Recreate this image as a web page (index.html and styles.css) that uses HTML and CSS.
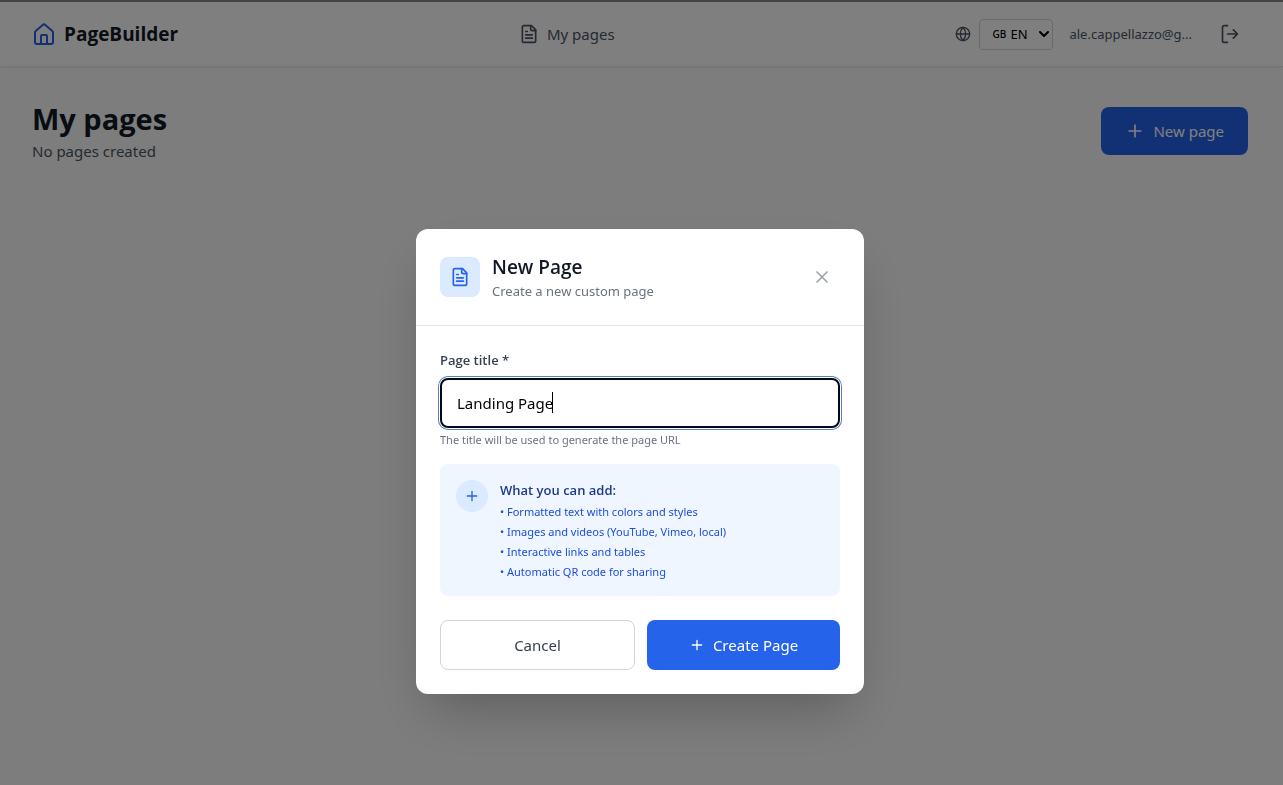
FILE: index.html
```html
<!DOCTYPE html>
<html lang="en">
<head>
    <meta charset="UTF-8">
    <meta name="viewport" content="width=device-width, initial-scale=1.0">
    <title>PageBuilder</title>
    <link rel="stylesheet" href="styles.css">
</head>
<body>
    <header class="navbar">
        <a href="#" class="brand">
            <svg class="icon-lg" viewBox="0 0 24 24"><path d="M3 10.500a2 2 0 0 1 .7-1.500l7-6.100a2 2 0 0 1 2.600 0l7 6.100a2 2 0 0 1 .7 1.500V20a2 2 0 0 1-2 2H5a2 2 0 0 1-2-2z"/><path d="M9 22v-8a1 1 0 0 1 1-1h4a1 1 0 0 1 1 1v8"/></svg>
            <span>PageBuilder</span>
        </a>
        <nav>
            <a href="#" class="nav-link">
                <svg class="icon-md" viewBox="0 0 24 24"><path d="M15 2H6a2 2 0 0 0-2 2v16a2 2 0 0 0 2 2h12a2 2 0 0 0 2-2V7z"/><path d="M14 2v4a2 2 0 0 0 2 2h4"/><path d="M10 9H8M16 13H8M16 17H8"/></svg>
                <span>My pages</span>
            </a>
        </nav>
        <div class="user-area">
            <div class="language">
                <svg class="icon-sm" viewBox="0 0 24 24"><circle cx="12" cy="12" r="10"/><path d="M12 2a14.500 14.500 0 0 0 0 20 14.500 14.500 0 0 0 0-20M2 12h20"/></svg>
                <div class="select-box">
                    <small class="flag">GB</small>
                    <select class="lang-select" aria-label="Language">
                        <option>EN</option>
                        <option>IT</option>
                    </select>
                    <svg class="chevron" viewBox="0 0 10 6"><path d="M1 1l4 4 4-4"/></svg>
                </div>
            </div>
            <span class="email">ale.cappellazzo@g...</span>
            <button type="button" class="logout" aria-label="Log out">
                <svg class="icon-md" viewBox="0 0 24 24"><path d="M9 22H5a2 2 0 0 1-2-2V4a2 2 0 0 1 2-2h4"/><path d="M16 17l5-5-5-5M21 12H9"/></svg>
            </button>
        </div>
    </header>

    <main class="content">
        <div>
            <h1 class="page-heading">My pages</h1>
            <p class="page-sub">No pages created</p>
        </div>
        <button type="button" class="btn btn-primary btn-new">
            <svg class="icon-md" viewBox="0 0 24 24"><path d="M5 12h14M12 5v14"/></svg>
            New page
        </button>
    </main>

    <div class="overlay">
        <div class="modal" role="dialog" aria-labelledby="modal-title">
            <div class="modal-header">
                <div class="modal-icon">
                    <svg class="icon-md" viewBox="0 0 24 24"><path d="M15 2H6a2 2 0 0 0-2 2v16a2 2 0 0 0 2 2h12a2 2 0 0 0 2-2V7z"/><path d="M14 2v4a2 2 0 0 0 2 2h4"/><path d="M10 9H8M16 13H8M16 17H8"/></svg>
                </div>
                <div class="modal-titles">
                    <h2 id="modal-title">New Page</h2>
                    <p>Create a new custom page</p>
                </div>
                <button type="button" class="close" aria-label="Close">
                    <svg class="icon-md" viewBox="0 0 24 24"><path d="M18 6L6 18M6 6l12 12"/></svg>
                </button>
            </div>
            <form class="modal-form">
                <label for="page-title">Page title *</label>
                <div class="input-box">
                    <input type="text" id="page-title" class="title-input" value="Landing Page">
                    <span class="caret"></span>
                </div>
                <p class="hint">The title will be used to generate the page URL</p>

                <div class="info">
                    <div class="info-icon">
                        <svg class="icon-sm" viewBox="0 0 24 24"><path d="M5 12h14M12 5v14"/></svg>
                    </div>
                    <div>
                        <h3>What you can add:</h3>
                        <ul>
                            <li>• Formatted text with colors and styles</li>
                            <li>• Images and videos (YouTube, Vimeo, local)</li>
                            <li>• Interactive links and tables</li>
                            <li>• Automatic QR code for sharing</li>
                        </ul>
                    </div>
                </div>

                <div class="actions">
                    <button type="button" class="btn btn-cancel">Cancel</button>
                    <button type="submit" class="btn btn-primary">
                        <svg class="icon-sm" viewBox="0 0 24 24"><path d="M5 12h14M12 5v14"/></svg>
                        Create Page
                    </button>
                </div>
            </form>
        </div>
    </div>
</body>
</html>
```
FILE: styles.css
```css
* {
    box-sizing: border-box;
}

body {
    margin: 0;
    min-height: 100vh;
    border-top: 2px solid #888;
    background-color: #fafafb;
    color: #111827;
    font-family: "Noto Sans", "Open Sans", sans-serif;
    font-size: 15px;
    line-height: 24px;
}

h1, h2, h3, p, ul {
    margin: 0;
    padding: 0;
}

h1, h2, h3, label, .brand {
    font-family: "Open Sans", "Noto Sans", sans-serif;
}

a {
    color: inherit;
    text-decoration: none;
}

button, input, select {
    font: inherit;
}

button {
    cursor: pointer;
}

svg {
    flex-shrink: 0;
    fill: none;
    stroke: currentColor;
    stroke-width: 2;
    stroke-linecap: round;
    stroke-linejoin: round;
}

.icon-sm {
    width: 16px;
    height: 16px;
}

.icon-md {
    width: 20px;
    height: 20px;
}

.icon-lg {
    width: 24px;
    height: 24px;
}

/* top bar */
.navbar {
    display: flex;
    justify-content: space-between;
    align-items: center;
    height: 65px;
    padding: 0 35px 0 32px;
    background-color: #fff;
    border-bottom: 1px solid #e5e7eb;
    box-shadow: 0 1px 2px rgba(0, 0, 0, 0.05);
}

.brand {
    display: flex;
    align-items: center;
    gap: 8px;
    font-size: 19px;
    font-weight: 700;
}

.brand svg {
    color: #2563eb;
}

.nav-link {
    display: flex;
    align-items: center;
    gap: 8px;
    color: #4b5563;
}

.user-area {
    display: flex;
    align-items: center;
    gap: 16px;
    color: #4b5563;
}

.language {
    display: flex;
    align-items: center;
    gap: 8px;
}

.select-box {
    position: relative;
    display: flex;
    align-items: center;
}

.flag {
    position: absolute;
    left: 13px;
    color: #000;
    font-size: 10px;
    font-weight: 500;
    pointer-events: none;
}

.lang-select {
    appearance: none;
    width: 74px;
    height: 31px;
    padding: 0 20px 0 30px;
    border: 1px solid #d1d5db;
    border-radius: 4px;
    background-color: #fff;
    color: #000;
    font-size: 13px;
}

.chevron {
    position: absolute;
    right: 4px;
    width: 10px;
    height: 6px;
    color: #000;
    pointer-events: none;
}

.email {
    font-size: 13px;
}

.logout {
    display: flex;
    margin-left: 4px;
    padding: 8px;
    border: none;
    background: none;
    color: #4b5563;
}

/* page */
.content {
    display: flex;
    justify-content: space-between;
    align-items: center;
    padding: 32px 35px 32px 32px;
}

.page-heading {
    font-size: 29px;
    font-weight: 700;
    line-height: 40px;
}

.page-sub {
    color: #4b5563;
}

.btn {
    display: flex;
    justify-content: center;
    align-items: center;
    gap: 8px;
    height: 50px;
    border: none;
    border-radius: 8px;
}

.btn-primary {
    background-color: #2563eb;
    color: #fff;
}

.btn-new {
    height: 48px;
    padding: 0 24px;
}

/* modal */
.overlay {
    position: fixed;
    inset: 0;
    display: flex;
    justify-content: center;
    align-items: flex-start;
    padding: 229px 19px 16px 16px;
    background-color: rgba(0, 0, 0, 0.5);
}

.modal {
    width: 100%;
    max-width: 448px;
    background-color: #fff;
    border-radius: 12px;
    box-shadow: 0 25px 50px -12px rgba(0, 0, 0, 0.25);
}

.modal-header {
    display: flex;
    align-items: center;
    gap: 12px;
    padding: 24px;
    border-bottom: 1px solid #e5e7eb;
}

.modal-icon {
    display: flex;
    padding: 10px;
    border-radius: 8px;
    background-color: #dbeafe;
    color: #2563eb;
}

.modal-titles {
    flex: 1;
}

.modal-titles h2 {
    font-size: 19px;
    font-weight: 600;
    line-height: 28px;
}

.modal-titles p {
    color: #6b7280;
    font-size: 13px;
    line-height: 20px;
}

.close {
    display: flex;
    padding: 8px;
    border: none;
    background: none;
    color: #9ca3af;
}

.modal-form {
    padding: 24px;
}

.modal-form label {
    display: block;
    margin-bottom: 8px;
    color: #374151;
    font-size: 13px;
    font-weight: 600;
    line-height: 20px;
}

.input-box {
    position: relative;
}

.title-input {
    display: block;
    width: 100%;
    height: 50px;
    padding: 0 15px;
    border: 2px solid #030b1a;
    border-radius: 8px;
    outline: none;
    box-shadow: 0 0 0 1px #fff, 0 0 0 2px #5b82b8;
    color: #000;
}

.caret {
    position: absolute;
    top: 14px;
    left: 112px;
    width: 1px;
    height: 21px;
    background-color: #000;
}

.hint {
    margin-top: 4px;
    color: #6b7280;
    font-size: 11px;
    line-height: 16px;
}

.info {
    display: flex;
    align-items: flex-start;
    gap: 12px;
    margin-top: 16px;
    padding: 16px;
    border-radius: 8px;
    background-color: #eff6ff;
}

.info-icon {
    display: flex;
    padding: 8px;
    border-radius: 50%;
    background-color: #dbeafe;
    color: #2563eb;
}

.info h3 {
    margin-bottom: 4px;
    color: #1e3a8a;
    font-size: 13px;
    font-weight: 600;
    line-height: 20px;
}

.info ul {
    display: flex;
    flex-direction: column;
    gap: 4px;
    list-style: none;
    color: #1d4ed8;
    font-size: 11px;
    line-height: 16px;
}

.actions {
    display: flex;
    gap: 12px;
    margin-top: 24px;
}

.actions .btn {
    flex: 1;
}

.btn-cancel {
    border: 1px solid #d1d5db;
    background-color: #fff;
    color: #374151;
}
```
